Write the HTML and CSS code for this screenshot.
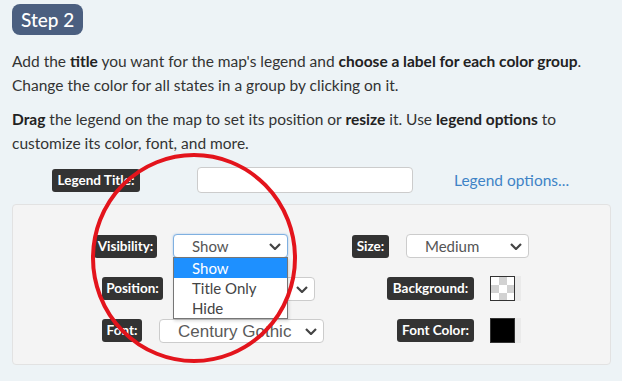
FILE: index.html
```html
<!DOCTYPE html>
<html lang="en">

<head>
    <meta charset="UTF-8">
    <meta name="viewport" content="width=device-width, initial-scale=1.0">
    <title>Step 2 - Legend</title>
    <link rel="stylesheet" href="styles.css">
</head>

<body>
    <div class="page">

        <!-- step header -->
        <div class="step">Step 2</div>

        <p class="intro">Add the <b>title</b> you want for the map's legend and <b>choose a label for each color group</b>.<br>
            Change the color for all states in a group by clicking on it.</p>
        <p class="intro"><b>Drag</b> the legend on the map to set its position or <b>resize</b> it. Use <b>legend options</b> to<br>
            customize its color, font, and more.</p>

        <!-- legend title -->
        <div class="title-row">
            <span class="tag tag-title">Legend Title:</span>
            <div class="text-input"></div>
            <a class="options-link" href="#">Legend options...</a>
        </div>

        <!-- legend options panel -->
        <div class="panel">
            <div class="row">
                <div class="group group-vis">
                    <span class="tag tag-vis">Visibility:</span>
                    <div class="select select-vis focused">Show<svg class="chev" width="12" height="7" viewBox="0 0 12 7"><polyline points="1,1 6,6 11,1"/></svg>
                        <!-- open dropdown list -->
                        <ul class="dropdown">
                            <li class="picked">Show</li>
                            <li>Title Only</li>
                            <li>Hide</li>
                        </ul>
                    </div>
                </div>
                <div class="group group-size">
                    <span class="tag tag-size">Size:</span>
                    <div class="select select-size">Medium<svg class="chev" width="12" height="7" viewBox="0 0 12 7"><polyline points="1,1 6,6 11,1"/></svg></div>
                </div>
            </div>

            <div class="row">
                <div class="group group-pos">
                    <span class="tag tag-pos">Position:</span>
                    <div class="select select-pos"><svg class="chev" width="12" height="7" viewBox="0 0 12 7"><polyline points="1,1 6,6 11,1"/></svg></div>
                </div>
                <div class="group group-bg">
                    <span class="tag tag-bg">Background:</span>
                    <div class="swatch checker"></div>
                    <div class="swatch-edge"></div>
                </div>
            </div>

            <div class="row">
                <div class="group group-font">
                    <span class="tag tag-font">Font:</span>
                    <div class="select select-font">Century Gothic<svg class="chev" width="12" height="7" viewBox="0 0 12 7"><polyline points="1,1 6,6 11,1"/></svg></div>
                </div>
                <div class="group group-fc">
                    <span class="tag tag-fc">Font Color:</span>
                    <div class="swatch black"></div>
                    <div class="swatch-edge"></div>
                </div>
            </div>
        </div>

        <!-- red hand-drawn circle over the visibility options -->
        <svg class="circle" width="214" height="216" viewBox="0 0 214 216">
            <ellipse cx="104" cy="106" rx="101" ry="103" />
        </svg>
    </div>
</body>

</html>
```

FILE: styles.css
```css
body {
    background-color: #edf3f6;
    font-family: Lato, "Open Sans", sans-serif;
    color: #333333;
    margin: 0;
}

.page {
    position: relative;
    padding: 4px 12px 16px 12px;
}

.step {
    display: inline-block;
    background-color: #4b5f80;
    color: #ffffff;
    font-size: 19px;
    font-weight: 500;
    height: 31px;
    line-height: 31px;
    padding: 0 9px;
    border-radius: 8px;
}

.intro {
    font-size: 15.5px;
    line-height: 24px;
    margin: 14px 0 0 0;
    white-space: nowrap;
}

.intro + .intro {
    margin-top: 10px;
}

.intro b {
    color: #222222;
}

/* dark label tags */
.tag {
    display: inline-block;
    background-color: #333333;
    color: #ffffff;
    font-weight: bold;
    font-size: 13.5px;
    height: 23px;
    line-height: 23px;
    text-align: center;
    border-radius: 3px;
    white-space: nowrap;
}

.tag-title { width: 88px; }
.tag-vis { width: 63px; }
.tag-size { width: 37px; }
.tag-pos { width: 61px; }
.tag-bg { width: 87px; }
.tag-font { width: 40px; }
.tag-fc { width: 77px; }

.title-row {
    display: flex;
    align-items: center;
    margin-top: 12px;
    padding-left: 40px;
}

.text-input {
    width: 214px;
    height: 24px;
    margin-left: 57px;
    background-color: #ffffff;
    border: 1px solid #cccccc;
    border-radius: 4px;
}

.options-link {
    margin-left: 41px;
    color: #3f83c6;
    text-decoration: none;
    font-size: 15.5px;
}

.panel {
    margin-top: 11px;
    width: 599px;
    background-color: #f4f4f4;
    border: 1px solid #e2e2e2;
    border-radius: 4px;
    padding: 29px 0 22px 0;
    box-sizing: border-box;
}

.row {
    display: grid;
    grid-template-columns: 330px 1fr;
    height: 24px;
    align-items: center;
}

.row + .row {
    margin-top: 18px;
}

.group {
    display: flex;
    align-items: center;
}

.group-vis { padding-left: 81px; }
.group-pos { padding-left: 89px; }
.group-font { padding-left: 89px; }
.group-size { padding-left: 9px; }
.group-bg { padding-left: 44px; }
.group-fc { padding-left: 54px; }

.select {
    position: relative;
    height: 24px;
    line-height: 23px;
    margin-left: 16px;
    padding-left: 18px;
    box-sizing: border-box;
    background-color: #ffffff;
    border: 1px solid #cccccc;
    border-radius: 4px;
    font-size: 15px;
    color: #555555;
}

.select.focused {
    border-color: #7fb0e0;
    box-shadow: 0 0 2px rgba(80, 150, 230, 0.5);
}

.select-vis { width: 115px; }
.select-size { width: 123px; margin-left: 17px; }
.select-pos { width: 136px; }
.select-font {
    width: 165px;
    margin-left: 17px;
    font-family: "Liberation Sans", Arial, sans-serif;
    font-size: 17px;
    color: #5a5a5a;
}

.chev {
    position: absolute;
    right: 6px;
    top: 8px;
    fill: none;
    stroke: #444444;
    stroke-width: 2.2;
}

.dropdown {
    position: absolute;
    left: -1px;
    top: 22px;
    width: 115px;
    margin: 0;
    padding: 0;
    list-style: none;
    background-color: #ffffff;
    border: 1px solid #767676;
    box-sizing: border-box;
    box-shadow: 1px 2px 3px rgba(0, 0, 0, 0.15);
    z-index: 2;
}

.dropdown li {
    height: 20px;
    line-height: 20px;
    padding-left: 18px;
    font-size: 15px;
    color: #444444;
}

.dropdown li.picked {
    background-color: #1e90ff;
    color: #ffffff;
}

.swatch {
    width: 25px;
    height: 25px;
    margin-left: 16px;
    box-sizing: border-box;
    border: 1px solid #333333;
}

.swatch-edge {
    width: 6px;
    height: 25px;
    background-color: #eaeaea;
}

.checker {
    background-color: #ffffff;
    background-image:
        linear-gradient(45deg, #d2d2d2 25%, transparent 25%, transparent 75%, #d2d2d2 75%),
        linear-gradient(45deg, #d2d2d2 25%, transparent 25%, transparent 75%, #d2d2d2 75%);
    background-size: 16px 16px;
    background-position: 0 0, 8px 8px;
}

.black {
    background-color: #000000;
}

.circle {
    position: absolute;
    left: 90px;
    top: 152px;
    fill: none;
    stroke: #e3141c;
    stroke-width: 4;
    z-index: 3;
}
```
